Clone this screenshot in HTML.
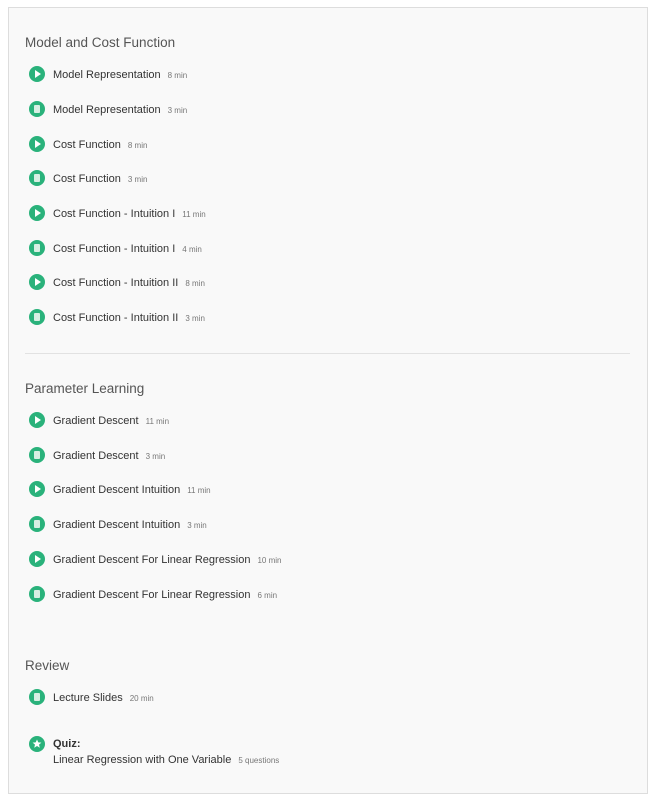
<!DOCTYPE html>
<html><head><style>
body{margin:0;width:654px;height:799px;background:#fff;font-family:"Liberation Sans",sans-serif;position:relative;overflow:hidden}
.box{position:absolute;left:8px;top:7px;width:638px;height:785px;border:1px solid #ddd;background:#f9f9f9}
.h{position:absolute;left:25px;font-size:13.5px;color:#555;line-height:16px}
.it{position:absolute;left:29px;height:16px;display:flex;align-items:center}
.ic{width:16px;height:16px;border-radius:50%;background:#2ab27b;position:relative;flex:none}
.pl::after{content:"";position:absolute;left:6px;top:4px;border-left:6px solid #fff;border-top:4px solid transparent;border-bottom:4px solid transparent}
.rd::after{content:"";position:absolute;left:5px;top:4px;width:6px;height:8px;background:#d8efe3;border-radius:1px}
.t{margin-left:8px;font-size:11px;color:#333;position:relative;top:1px}
.m{margin-left:7px;font-size:8px;color:#777;position:relative;top:1px}
.div{position:absolute;left:25px;top:353px;width:605px;height:1px;background:#e2e2e2}
</style></head><body>
<div class="box"></div>
<div class="h" style="top:35px">Model and Cost Function</div>
<div class="it" style="top:66px"><span class="ic pl"></span><span class="t">Model Representation</span><span class="m">8 min</span></div>
<div class="it" style="top:101px"><span class="ic rd"></span><span class="t">Model Representation</span><span class="m">3 min</span></div>
<div class="it" style="top:136px"><span class="ic pl"></span><span class="t">Cost Function</span><span class="m">8 min</span></div>
<div class="it" style="top:170px"><span class="ic rd"></span><span class="t">Cost Function</span><span class="m">3 min</span></div>
<div class="it" style="top:205px"><span class="ic pl"></span><span class="t">Cost Function - Intuition I</span><span class="m">11 min</span></div>
<div class="it" style="top:240px"><span class="ic rd"></span><span class="t">Cost Function - Intuition I</span><span class="m">4 min</span></div>
<div class="it" style="top:274px"><span class="ic pl"></span><span class="t">Cost Function - Intuition II</span><span class="m">8 min</span></div>
<div class="it" style="top:309px"><span class="ic rd"></span><span class="t">Cost Function - Intuition II</span><span class="m">3 min</span></div>
<div class="div"></div>
<div class="h" style="top:381px">Parameter Learning</div>
<div class="it" style="top:412px"><span class="ic pl"></span><span class="t">Gradient Descent</span><span class="m">11 min</span></div>
<div class="it" style="top:447px"><span class="ic rd"></span><span class="t">Gradient Descent</span><span class="m">3 min</span></div>
<div class="it" style="top:481px"><span class="ic pl"></span><span class="t">Gradient Descent Intuition</span><span class="m">11 min</span></div>
<div class="it" style="top:516px"><span class="ic rd"></span><span class="t">Gradient Descent Intuition</span><span class="m">3 min</span></div>
<div class="it" style="top:551px"><span class="ic pl"></span><span class="t">Gradient Descent For Linear Regression</span><span class="m">10 min</span></div>
<div class="it" style="top:586px"><span class="ic rd"></span><span class="t">Gradient Descent For Linear Regression</span><span class="m">6 min</span></div>
<div class="h" style="top:658px">Review</div>
<div class="it" style="top:689px"><span class="ic rd"></span><span class="t">Lecture Slides</span><span class="m">20 min</span></div>
<div style="position:absolute;left:29px;top:736px"><span class="ic" style="display:block"><svg width="16" height="16" viewBox="0 0 16 16" style="position:absolute;left:0;top:0"><polygon points="8,3.5 9.3,6.4 12.4,6.6 10,8.6 10.8,11.7 8,10 5.2,11.7 6,8.6 3.6,6.6 6.7,6.4" fill="#fff"/></svg></span></div>
<div style="position:absolute;left:53px;top:738px;font-size:11px;font-weight:bold;color:#333">Quiz:</div>
<div style="position:absolute;left:53px;top:754px;font-size:11px;color:#333">Linear Regression with One Variable<span style="margin-left:7px;font-size:8px;color:#777">5 questions</span></div>
</body></html>
